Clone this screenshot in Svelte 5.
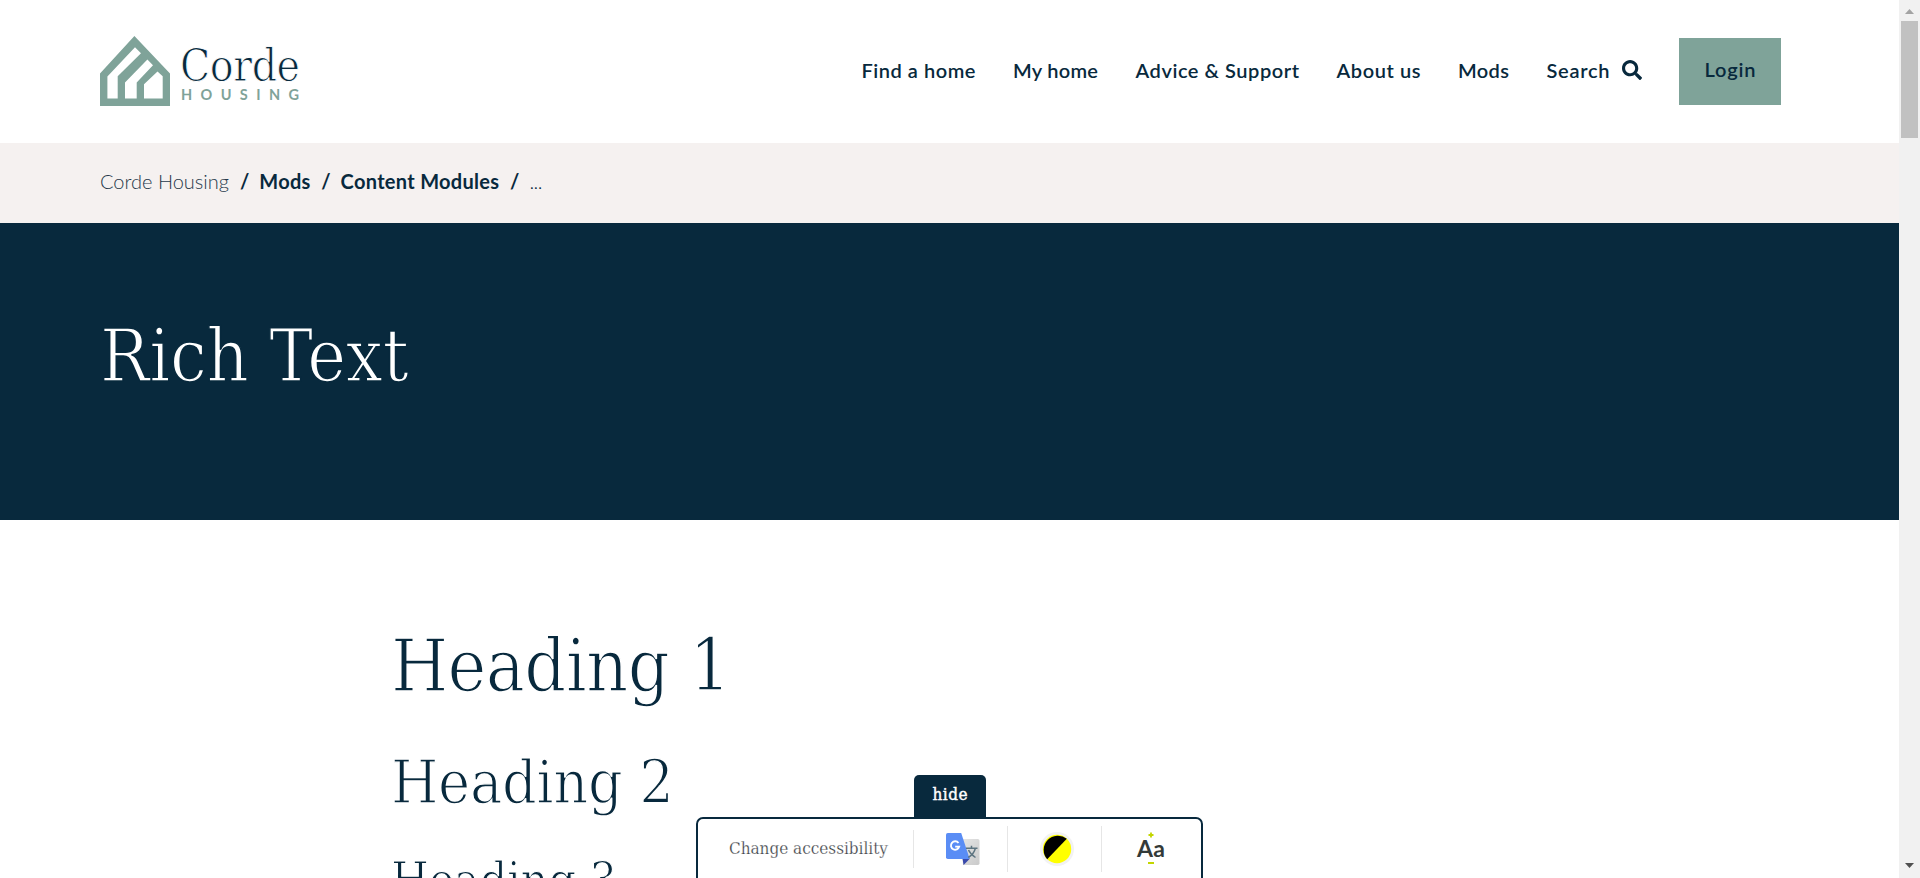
<script>
  const nav = [
    { label: 'Find a home', width: 114 },
    { label: 'My home', width: 85 },
    { label: 'Advice & Support', width: 163.5 },
    { label: 'About us', width: 84 },
    { label: 'Mods', width: 51 }
  ];

  const headings = [
    { tag: 'h1', text: 'Heading 1', width: 340 },
    { tag: 'h2', text: 'Heading 2', width: 283 },
    { tag: 'h3', text: 'Heading 3', width: 226 }
  ];

  // Tracks a line of text so that it fills the given width.
  function track(node, width) {
    const natural = node.getBoundingClientRect().width;
    const gap = (width - natural) / (node.textContent.length - 1);
    node.style.letterSpacing = `${gap}px`;
    node.style.marginRight = `${-gap}px`;
  }
</script>

<div class="window">
  <div class="page">
    <header>
      <a class="logo" href="#home" aria-label="Corde Housing">
        <svg width="70" height="70" viewBox="0 0 70 70">
          <path fill="#7fa399" fill-rule="evenodd" d="M34.4 0 70 37.4V70H0V37.4ZM7.4 40.5V62.4H17.7V40.3L41 17.2 35 11.3ZM25 46.4V62.4H36.7V46.4L53 29.3 47.4 23.4ZM44 48.3V62.4H62.7V40.2L57.5 35.5Z" />
        </svg>
        <span class="words">
          <span class="name"><span use:track={120}>Corde</span></span>
          <span class="sub"><span use:track={118}>HOUSING</span></span>
        </span>
      </a>
      <nav>
        {#each nav as item}
          <a href="#nav"><span use:track={item.width}>{item.label}</span></a>
        {/each}
        <a class="search" href="#search">
          <span use:track={63}>Search</span>
          <svg width="20" height="20" viewBox="0 0 512 512"><path fill="#08293d" d="M505 442.700 405.300 343c-4.500-4.500-10.600-7-17-7H372c27.600-35.300 44-79.700 44-128C416 93.100 322.900 0 208 0S0 93.100 0 208s93.100 208 208 208c48.300 0 92.700-16.400 128-44v16.300c0 6.400 2.500 12.500 7 17l99.700 99.700c9.400 9.400 24.600 9.400 33.900 0l28.300-28.300c9.400-9.400 9.400-24.600.1-34zM208 336c-70.700 0-128-57.200-128-128 0-70.700 57.200-128 128-128 70.700 0 128 57.200 128 128 0 70.700-57.200 128-128 128z" /></svg>
        </a>
        <a class="login" href="#login"><span use:track={51}>Login</span></a>
      </nav>
    </header>

    <div class="crumbs">
      <span class="light" use:track={129}>Corde Housing</span>
      <i>/</i>
      <b use:track={51}>Mods</b>
      <i>/</i>
      <b use:track={158.5}>Content Modules</b>
      <i>/</i>
      <span class="dots" use:track={13}>...</span>
    </div>

    <section class="hero"><h1><span use:track={309}>Rich Text</span></h1></section>

    <main>
      {#each headings as h}
        <svelte:element this={h.tag}><span use:track={h.width}>{h.text}</span></svelte:element>
      {/each}
    </main>
  </div>

  <div class="scrollbar">
    <svg width="9" height="5" viewBox="0 0 9 5"><path fill="#a3a3a3" d="M4.500 0 9 5H0Z" /></svg>
    <div class="thumb"></div>
    <svg class="down" width="9" height="5" viewBox="0 0 9 5"><path fill="#505050" d="M0 0H9L4.500 5Z" /></svg>
  </div>

  <div class="access">
    <div class="tab"><span use:track={35}>hide</span></div>
    <div class="bar">
      <div class="cell label"><span use:track={159}>Change accessibility</span></div>
      <div class="cell google">
        <svg width="34" height="33" viewBox="0 0 34 33">
          <defs>
            <linearGradient id="paper" x1="0" y1="0" x2="1" y2="1"><stop offset="0" stop-color="#e6e6e6" /><stop offset="1" stop-color="#cacaca" /></linearGradient>
          </defs>
          <path fill="url(#paper)" d="M15 6H31.800Q33.500 6 33.500 7.700V30.300Q33.500 32 31.800 32H17Z" />
          <path fill="#3949ab" d="M16.500 25.500H24L17.600 32Z" />
          <path fill="#5a8df5" d="M1.800 0H15.200L23.700 26H1.800Q0 26 0 24.300V1.700Q0 0 1.800 0Z" />
          <path fill="none" stroke="#fff" stroke-width="1.900" d="M12.500 10A4.200 4.200 0 1 0 13.200 13.600H9.200" />
          <path fill="none" stroke="#5d7480" stroke-width="1.500" d="M20 15.300H31.500M25.500 12.800V15.300M29.300 15.500C28.200 20 25.500 22.500 22.300 24.500M22.500 17C24 20.500 26.500 22.500 29.500 24.500" />
        </svg>
      </div>
      <div class="cell contrast">
        <svg width="34" height="34" viewBox="0 0 34 34">
          <circle cx="17" cy="17" r="17" fill="#f2f2f3" />
          <circle cx="17" cy="17" r="14.200" fill="#ff0" />
          <path d="M7.200 27.200A14.200 14.200 0 0 1 26.800 6.800Z" />
        </svg>
      </div>
      <div class="cell size">
        <svg width="8" height="6" viewBox="0 0 8 6"><path stroke="#c3d600" stroke-width="1.800" d="M1.500 3H6.500M4 .5V5.500" /></svg>
        <span use:track={28}>Aa</span>
        <svg class="minus" width="8" height="2" viewBox="0 0 8 2"><path fill="#c3d600" d="M1 0H7V2H1Z" /></svg>
      </div>
    </div>
  </div>
</div>

<style>
  :global(body) { margin: 0; background: #fff; overflow: hidden; }
  .window {
    position: relative;
    display: flex;
    width: 1920px;
    height: 878px;
    overflow: hidden;
    color: #08293d;
    font-family: Lato, sans-serif;
    font-size: 20px;
  }
  .window * { box-sizing: border-box; }
  span, b { white-space: nowrap; }
  a span, h1 span, h2 span, h3 span, .label span, .tab span, .crumbs span, .crumbs b, .words span span, .size span { display: inline-block; }
  a { color: inherit; text-decoration: none; }
  svg { display: block; flex: none; }
  .page { width: 1899px; flex: none; overflow: hidden; }

  header { display: flex; justify-content: space-between; height: 143px; padding: 36px 118px 0 100px; }
  .logo { display: flex; gap: 10px; }
  .words { display: flex; flex-direction: column; padding-top: 10px; }
  .name { height: 42px; font: 44px/40px "DejaVu Serif Condensed", "DejaVu Serif", serif; -webkit-text-stroke: .9px #fff; }
  .sub { height: 14px; padding-left: 1px; font-size: 14.500px; line-height: 14px; font-weight: 700; color: #7fa399; }
  nav { display: flex; align-items: center; gap: 37.500px; height: 67px; margin-top: 2px; font-size: 20px; font-weight: 600; }
  nav a { line-height: 26px; padding-bottom: 4px; }
  .search { display: flex; align-items: center; gap: 12px; }
  .search svg { margin-top: 1px; }
  .login { width: 102px; height: 67px; line-height: 63px; background: #7fa399; text-align: center; }

  .crumbs { display: flex; height: 80px; padding: 0 100px 4px; align-items: center; background: #f5f1f0; }
  .crumbs i { width: 30.300px; padding-left: 1px; text-align: center; font-style: normal; font-weight: 700; }
  .light { font-weight: 300; color: #26384a; }
  .dots { font-weight: 300; }

  .hero { height: 297px; padding: 87px 100px 0; background: #08293d; color: #fff; }
  h1, h2, h3 { margin: 0; font-family: "DejaVu Serif Condensed", "DejaVu Serif", serif; font-weight: 400; white-space: nowrap; }
  .hero h1 { font-size: 73px; line-height: 92px; -webkit-text-stroke: 1.500px #08293d; }
  main { display: flex; flex-direction: column; align-items: flex-start; padding: 100px 0 0 391px; -webkit-text-stroke: 1.500px #fff; }
  main h1 { font-size: 73px; line-height: 92px; }
  main h2 { margin-top: 32px; font-size: 60.500px; line-height: 76px; -webkit-text-stroke: 1.400px #fff; }
  main h3 { margin-top: 29px; font-size: 48.500px; line-height: 62px; -webkit-text-stroke: 1.100px #fff; }

  .scrollbar { display: flex; flex-direction: column; align-items: center; width: 21px; padding: 9px 0 10px; background: #f1f1f1; }
  .thumb { width: 17px; height: 117px; margin-top: 7px; background: #c1c1c1; }
  .down { margin-top: auto; }

  .access { position: absolute; left: 696px; bottom: 0; width: 507px; height: 103px; }
  .tab { width: 72px; height: 42px; margin-left: 218px; border-radius: 5px 5px 0 0; background: #08293d; color: #fff; text-align: center; font: 17px/38px "DejaVu Serif Condensed", "DejaVu Serif", serif; -webkit-text-stroke: .4px #fff; }
  .bar { display: flex; height: 70px; padding-top: 7px; border: 2px solid #08293d; border-radius: 7px; background: #fff; }
  .cell { display: flex; justify-content: center; width: 94px; height: 46px; padding-top: 6px; border-right: 1px solid #e6e6e6; }
  .cell.label { width: 216px; height: 38px; margin-top: 4px; padding: 0 0 0 31px; justify-content: flex-start; color: #36393e; font: 17px/36px "DejaVu Serif Condensed", "DejaVu Serif", serif; -webkit-text-stroke: .25px #fff; }
  .google { padding: 7px 0 0 4px; }
  .contrast { padding-left: 5px; }
  .cell.size { width: 98px; flex-direction: column; align-items: center; justify-content: flex-start; border: 0; color: #333a38; font: 700 23px/22px Lato, sans-serif; }
  .size svg { margin-bottom: -1px; }
  .size .minus { margin: 3px 0 0; }
</style>
